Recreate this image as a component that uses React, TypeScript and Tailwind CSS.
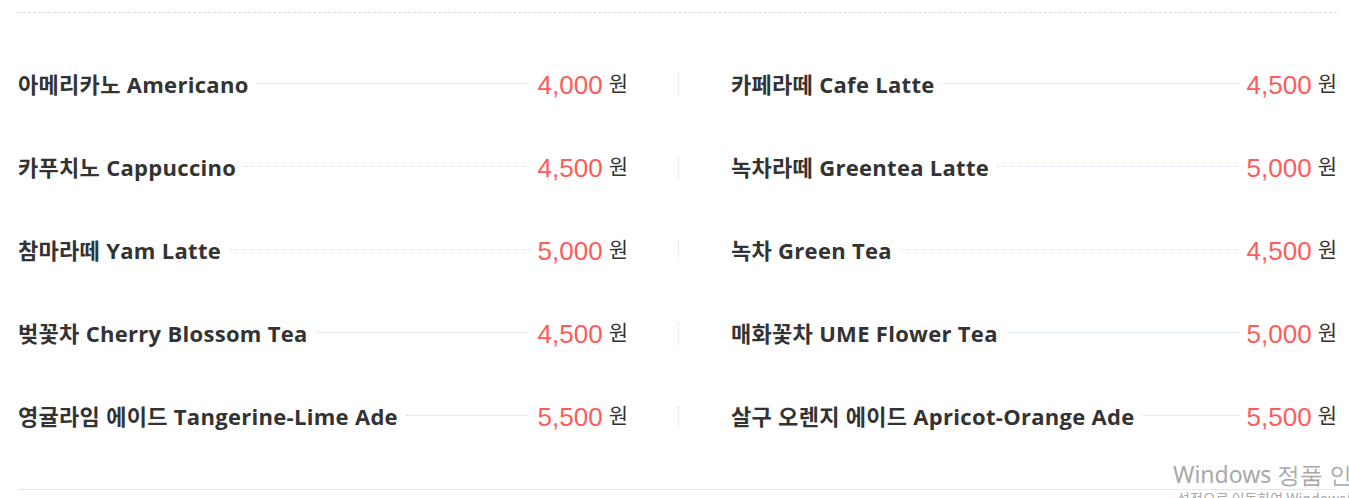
import React from "react";

interface MenuItem {
  name: string;
  price: string;
}

const left: MenuItem[] = [
  { name: "아메리카노 Americano", price: "4,000" },
  { name: "카푸치노 Cappuccino", price: "4,500" },
  { name: "참마라떼 Yam Latte", price: "5,000" },
  { name: "벚꽃차 Cherry Blossom Tea", price: "4,500" },
  { name: "영귤라임 에이드 Tangerine-Lime Ade", price: "5,500" },
];

const right: MenuItem[] = [
  { name: "카페라떼 Cafe Latte", price: "4,500" },
  { name: "녹차라떼 Greentea Latte", price: "5,000" },
  { name: "녹차 Green Tea", price: "4,500" },
  { name: "매화꽃차 UME Flower Tea", price: "5,000" },
  { name: "살구 오렌지 에이드 Apricot-Orange Ade", price: "5,500" },
];

function Row({ name, price }: MenuItem) {
  return (
    <div className="h-[83px] flex items-center">
      <span className="font-['Open_Sans','Noto_Sans_CJK_KR',sans-serif] text-[22px] font-bold text-[#333] whitespace-nowrap tracking-[0.3px]">
        {name}
      </span>
      <span className="flex-1 mx-2 mt-[-3px] border-t border-dotted border-[#d6dde8]" />
      <span className="font-['Liberation_Sans',sans-serif] text-[26px] text-[#ff5b5b] leading-none">
        {price}
      </span>
      <span className="ml-[6px] text-[21px] text-[#333] leading-none mt-[-4px]">원</span>
    </div>
  );
}

function App() {
  return (
    <div className="relative w-[1349px] h-[498px] bg-white overflow-hidden font-['Noto_Sans_CJK_KR',sans-serif]">
      <div className="pt-[12px] pl-[18px] pr-[12px]">
        <div className="border-t border-dashed border-[#d8d8f0]" />
        <div className="grid grid-cols-[610px_1px_1fr] gap-x-[50px] pt-[30px] pb-[31px]">
          <div className="flex flex-col">
            {left.map((item, key) => (
              <Row key={key} {...item} />
            ))}
          </div>
          <div className="flex flex-col">
            {left.map((_, key) => (
              <div key={key} className="h-[83px] flex items-center">
                <div className="h-[22px] border-l border-dotted border-[#dcd6ee]" />
              </div>
            ))}
          </div>
          <div className="flex flex-col pl-[2px]">
            {right.map((item, key) => (
              <Row key={key} {...item} />
            ))}
          </div>
        </div>
        <div className="border-t border-[#e6e3ec]" />
      </div>

      {/* Windows activation overlay */}
      <div className="absolute left-[1173px] top-[460px] text-[#a8a8a8] whitespace-nowrap">
        <div className="font-['Noto_Sans',sans-serif] text-[23px] leading-[29px]">
          Windows 정품 인증
        </div>
        <div className="text-[14px] leading-[18px] pl-[4px]">
          설정으로 이동하여 Windows를 정품 인증합니다.
        </div>
      </div>
    </div>
  );
}

export default App;
